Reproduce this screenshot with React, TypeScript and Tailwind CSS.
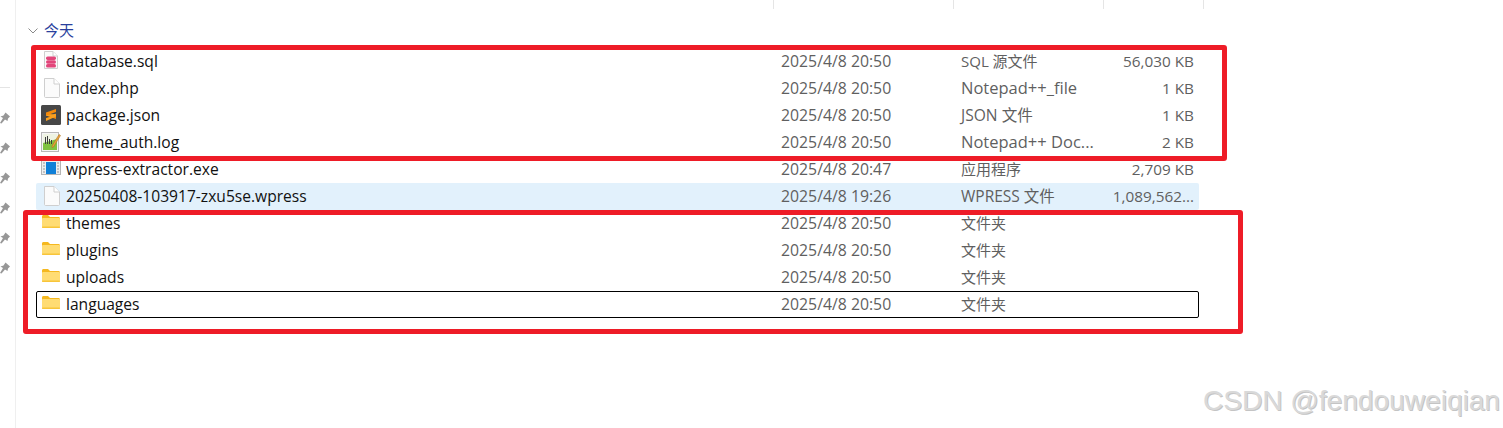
const FONT = "font-['Open_Sans','Noto_Sans_CJK_SC',sans-serif]";

function FileIcon() {
  return (
    <svg width="16" height="20" viewBox="0 0 16 20" fill="none">
      <path d="M.5.5H10L15.5 6V18.5C15.5 19 15 19.5 14.5 19.5H1.5C1 19.5 .5 19 .5 18.5Z" fill="#fbfbfb" stroke="#cfcfcf" />
      <path d="M10 .5V6H15.5" fill="#fff" stroke="#cfcfcf" />
    </svg>
  );
}
function SqlIcon() {
  return (
    <svg width="14" height="18" viewBox="0 0 14 18" fill="none">
      <path d="M.5.5H9L13.5 5V17.5H.5Z" fill="#fbfbfb" stroke="#cfcfcf" />
      <path d="M9 .5V5H13.5" fill="#fff" stroke="#cfcfcf" />
      <rect x="2" y="5.5" width="10" height="3.4" rx="1.6" fill="#e2457a" />
      <rect x="2" y="9.3" width="10" height="3.4" rx="1.6" fill="#e2457a" />
      <rect x="2" y="13.1" width="10" height="3.4" rx="1.6" fill="#e2457a" />
    </svg>
  );
}
function SublimeIcon() {
  return (
    <svg width="20" height="20" viewBox="0 0 20 20">
      <rect width="20" height="20" rx="1.5" fill="#474747" />
      <path d="M15 4L5 7.4V10.6L15 14V11L9.5 9L15 7Z" fill="#f58a0b" />
      <path d="M5 10.2L15 8.8V11.6L5 16V13L10 11.4L5 10.8Z" fill="#f9a020" />
    </svg>
  );
}
function LogIcon() {
  return (
    <svg width="20" height="20" viewBox="0 0 20 20">
      <rect x="0.5" y="0.5" width="17" height="19" fill="#f5f5f5" stroke="#b8b8b8" />
      <rect x="2" y="2" width="14" height="16" fill="#eef3e2" />
      <path d="M2 18V11L16 7V18Z" fill="#7fc241" />
      <path d="M4.5 12V5M6.5 12V4M8.5 12V7M10.5 12V8" stroke="#3d3d3d" strokeWidth="1" />
      <path d="M11 14L18 2.5L19.5 3.5L12.5 15L11 15.5Z" fill="#e8a33c" stroke="#a96d1c" strokeWidth="0.5" />
    </svg>
  );
}
function ExeIcon() {
  return (
    <svg width="20" height="15" viewBox="0 0 20 15">
      <rect x="0.5" y="0.5" width="19" height="14" fill="#eeeeee" stroke="#b5b5b5" />
      <rect x="5" y="2" width="10" height="12" fill="#1080d8" />
      <path d="M2 3h2M2 6h2M2 9h2M2 12h2M16 3h2M16 6h2M16 9h2M16 12h2" stroke="#9a9a9a" />
    </svg>
  );
}
function FolderIcon() {
  return (
    <svg width="18" height="13" viewBox="0 0 18 13">
      <path d="M0 1.5C0 .6.6 0 1.5 0H6L8 2H16.5C17.4 2 18 2.6 18 3.5V5H0Z" fill="#f5b81f" />
      <rect y="3" width="18" height="10" rx="1" fill="#ffdc73" />
      <rect y="11.5" width="18" height="1.5" rx=".7" fill="#f8c53a" />
    </svg>
  );
}
function Pin() {
  return (
    <svg width="10" height="12" viewBox="0 0 10 12">
      <path d="M5.5 0.5L10 4.5L8 6.5L7.5 9L5 7.5L1.5 11.5L0 11L3 6L0.5 4.5L3.5 3.5Z" fill="#979797" />
    </svg>
  );
}

type Row = { icon: React.ReactNode; name: string; date: string; type: string; size?: string; iconClass: string; rowClass?: string; typeClass?: string };

const D50 = "2025/4/8 20:50";
const top: Row[] = [
  { icon: <SqlIcon />, name: "database.sql", date: D50, type: "SQL 源文件", size: "56,030 KB", iconClass: "pl-[8px] -mt-[4px]" },
  { icon: <FileIcon />, name: "index.php", date: D50, type: "Notepad++_file", size: "1 KB", iconClass: "pl-[8px] -mt-[1px]", typeClass: "text-[16.5px]" },
  { icon: <SublimeIcon />, name: "package.json", date: D50, type: "JSON 文件", size: "1 KB", iconClass: "pl-[5px] -mt-[2px]", typeClass: "text-[15.6px]" },
  { icon: <LogIcon />, name: "theme_auth.log", date: D50, type: "Notepad++ Doc...", size: "2 KB", iconClass: "pl-[5px] -mt-[1px]", typeClass: "text-[16.5px]" },
];
const middle: Row[] = [
  { icon: <ExeIcon />, name: "wpress-extractor.exe", date: "2025/4/8 20:47", type: "应用程序", size: "2,709 KB", iconClass: "pl-[5px] -mt-[5px]" },
  { icon: <FileIcon />, name: "20250408-103917-zxu5se.wpress", date: "2025/4/8 19:26", type: "WPRESS 文件", size: "1,089,562...", iconClass: "pl-[8px] -mt-[1px]", rowClass: "bg-[#e2f1fc] rounded-[2px]", typeClass: "text-[15.5px]" },
];
const bottom: Row[] = [
  { icon: <FolderIcon />, name: "themes", date: D50, type: "文件夹", iconClass: "pl-[6px] -mt-[5px]" },
  { icon: <FolderIcon />, name: "plugins", date: D50, type: "文件夹", iconClass: "pl-[6px] -mt-[5px]" },
  { icon: <FolderIcon />, name: "uploads", date: D50, type: "文件夹", iconClass: "pl-[6px] -mt-[5px]" },
  { icon: <FolderIcon />, name: "languages", date: D50, type: "文件夹", iconClass: "pl-[6px] -mt-[5px]", rowClass: "outline outline-1 -outline-offset-1 outline-black rounded-[2px]" },
];

function FileRow({ r }: { r: Row }) {
  return (
    <div className={`flex h-[27px] items-center w-[1163px] ${r.rowClass ?? ""}`}>
      <div className={`w-[30px] shrink-0 flex items-center ${r.iconClass}`}>{r.icon}</div>
      <div className="w-[715px] shrink-0 text-[15.6px] text-[#111111] whitespace-nowrap">{r.name}</div>
      <div className="w-[180px] shrink-0 text-[15.8px] text-[#5f5f5f] whitespace-nowrap">{r.date}</div>
      <div className={`w-[150px] shrink-0 text-[#5f5f5f] whitespace-nowrap ${r.typeClass ?? "text-[15px]"}`}>{r.type}</div>
      <div className="w-[83px] shrink-0 text-[15.3px] text-[#5f5f5f] text-right whitespace-nowrap">{r.size}</div>
    </div>
  );
}

export default function App() {
  return (
    <div className={`relative flex h-[428px] w-[1503px] overflow-hidden bg-white ${FONT}`}>
      <aside className="w-[16px] shrink-0 border-r border-[#efefef] flex flex-col items-start">
        <div className="mt-[87px] h-px w-[10px] bg-[#e4e4e4]" />
        <div className="mt-[24px] flex flex-col gap-[18px]">
          {[0, 1, 2, 3, 4, 5].map((i) => (
            <Pin key={i} />
          ))}
        </div>
      </aside>
      <main className="flex-1 min-w-0">
        <div className="flex h-[9px] ml-[757px]">
          <div className="w-[180px] border-l border-[#e5e5e5]" />
          <div className="w-[150px] border-l border-[#e5e5e5]" />
          <div className="w-[100px] border-l border-[#e5e5e5]" />
          <div className="w-px border-l border-[#e5e5e5]" />
        </div>
        <div className="flex items-center h-[27px] mt-[8px] ml-[12px] gap-[6px] text-[#2a3f9d] text-[15px]">
          <svg width="10" height="6" viewBox="0 0 10 6" fill="none" stroke="#8a8a8a" strokeWidth="1">
            <path d="M.5.5L5 5L9.5.5" />
          </svg>
          <span>今天</span>
        </div>
        <div className="ml-[20px] mt-[4px]">
          <div className="relative">
            {top.map((r) => (
              <FileRow key={r.name} r={r} />
            ))}
            <div className="absolute left-[-5px] top-[-3px] h-[116px] w-[1196px] rounded-[3px] border-[5px] border-[#ee1c27] pointer-events-none" />
          </div>
          {middle.map((r) => (
            <FileRow key={r.name} r={r} />
          ))}
          <div className="relative">
            {bottom.map((r) => (
              <FileRow key={r.name} r={r} />
            ))}
            <div className="absolute left-[-13px] top-0 h-[124px] w-[1220px] rounded-[3px] border-[5px] border-[#ee1c27] pointer-events-none" />
          </div>
        </div>
      </main>
      <div className="absolute right-[3px] bottom-[13px] text-[28.1px] leading-none font-['Liberation_Sans',sans-serif] text-[#d9d9d9] [text-shadow:1px_1px_0_#c4c4c4]">
        CSDN @fendouweiqian
      </div>
    </div>
  );
}
